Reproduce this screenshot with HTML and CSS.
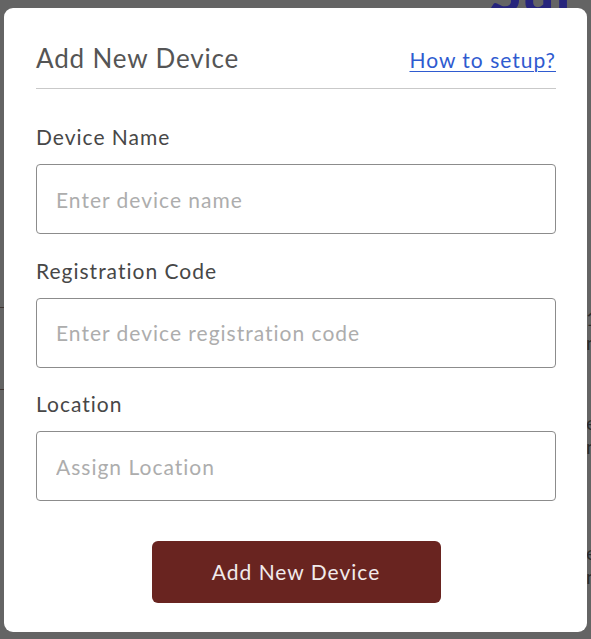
FILE: index.html
```html
<!DOCTYPE html>
<html lang="en">
<head>
<meta charset="utf-8">
<title>Add New Device</title>
<link rel="stylesheet" href="styles.css">
</head>
<body>
<div class="page-behind" aria-hidden="true">
  <div class="behind-title">Sur</div>
  <div class="behind-line behind-line-1"></div>
  <div class="behind-line behind-line-2"></div>
  <div class="behind-text behind-text-1">1<br>n</div>
  <div class="behind-text behind-text-2">e<br>n</div>
  <div class="behind-text behind-text-3">e<br>n</div>
</div>
<div class="backdrop">
  <div class="modal">
    <div class="modal-header">
      <h2 class="modal-title">Add New Device</h2>
      <a class="help-link" href="#">How to setup?</a>
    </div>
    <form class="device-form">
      <div class="field">
        <label class="field-label" for="name">Device Name</label>
        <input class="field-input" id="name" type="text" placeholder="Enter device name">
      </div>
      <div class="field">
        <label class="field-label" for="code">Registration Code</label>
        <input class="field-input" id="code" type="text" placeholder="Enter device registration code">
      </div>
      <div class="field">
        <label class="field-label" for="loc">Location</label>
        <input class="field-input" id="loc" type="text" placeholder="Assign Location">
      </div>
      <div class="actions">
        <button class="submit-btn" type="button">Add New Device</button>
      </div>
    </form>
  </div>
</div>
</body>
</html>
```

FILE: styles.css
```css
* { box-sizing: border-box; }

html, body {
  margin: 0;
  padding: 0;
  width: 591px;
  height: 639px;
  overflow: hidden;
  background: #646464;
  font-family: "Lato", "Open Sans", sans-serif;
}

.page-behind {
  position: absolute;
  inset: 0;
  z-index: 0;
}

.behind-title {
  position: absolute;
  left: 490px;
  top: -42px;
  font-size: 56px;
  font-weight: 900;
  color: #27257c;
  letter-spacing: 2px;
}

.behind-line {
  position: absolute;
  left: 0;
  width: 6px;
  height: 1px;
  background: #3f3431;
}
.behind-line-1 { top: 307px; }
.behind-line-2 { top: 389px; }

.behind-text {
  position: absolute;
  left: 586px;
  font-size: 20px;
  line-height: 24px;
  color: #2c2c2c;
}
.behind-text-1 { top: 306px; }
.behind-text-2 { top: 410px; }
.behind-text-3 { top: 540px; }

.backdrop {
  position: relative;
  z-index: 1;
  padding: 8px 4px 0 4px;
}

.modal {
  width: 583px;
  height: 624px;
  background: #ffffff;
  border-radius: 9px;
  padding: 0 31px 0 32px;
}

.modal-header {
  display: flex;
  justify-content: space-between;
  align-items: baseline;
  padding: 35px 0 15px;
  border-bottom: 1px solid #c9c9c9;
}

.modal-title {
  margin: 0;
  font-size: 26px;
  line-height: 30px;
  font-weight: 400;
  letter-spacing: 0.85px;
  color: #555555;
}

.help-link {
  font-size: 21px;
  line-height: 24px;
  letter-spacing: 1px;
  color: #2f5bd0;
  text-decoration: underline;
  text-decoration-thickness: 1px;
  text-underline-offset: 3px;
}

.device-form {
  display: flex;
  flex-direction: column;
  gap: 24.5px;
  padding-top: 36px;
}

.field {
  display: flex;
  flex-direction: column;
}

.field-label {
  font-size: 21px;
  line-height: 24px;
  letter-spacing: 1px;
  color: #474747;
  margin-bottom: 15px;
}

.field-input {
  height: 70px;
  width: 100%;
  border: 1px solid #8c8c8c;
  border-radius: 4px;
  padding: 0 19px;
  font-family: "Lato", "Open Sans", sans-serif;
  font-size: 21px;
  letter-spacing: 1px;
  color: #444444;
  background: #ffffff;
  outline: none;
}

.field-input::placeholder {
  color: #adadad;
}

.actions {
  display: flex;
  justify-content: center;
  padding-top: 15px;
}

.submit-btn {
  width: 289px;
  height: 62px;
  border: none;
  border-radius: 6px;
  background: #692420;
  color: #f1eaea;
  font-family: "Lato", "Open Sans", sans-serif;
  font-size: 21px;
  letter-spacing: 1px;
  cursor: pointer;
}
```
